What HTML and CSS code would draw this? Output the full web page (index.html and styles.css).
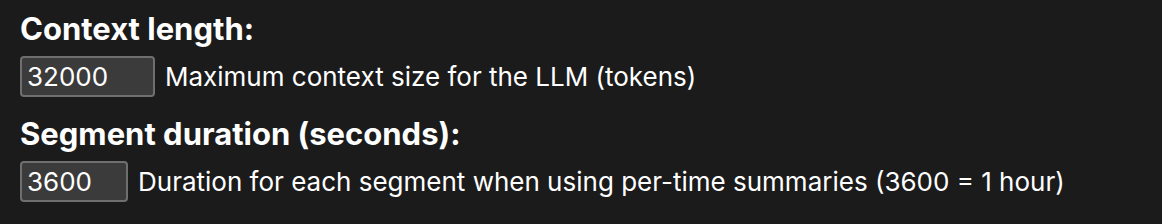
FILE: index.html
```html
<!DOCTYPE html>
<html>
<head>
<meta charset="utf-8">
<link rel="stylesheet" href="styles.css">
</head>
<body>
<div class="settings">
  <div class="field">
    <label class="label" for="ctx">Context length:</label>
    <div class="row">
      <input id="ctx" class="input input-wide" type="text" value="32000">
      <span class="desc">Maximum context size for the LLM (tokens)</span>
    </div>
  </div>
  <div class="field">
    <label class="label" for="seg">Segment duration (seconds):</label>
    <div class="row">
      <input id="seg" class="input input-narrow" type="text" value="3600">
      <span class="desc">Duration for each segment when using per-time summaries (3600 = 1 hour)</span>
    </div>
  </div>
</div>
</body>
</html>
```
FILE: styles.css
```css
html, body {
  margin: 0;
  padding: 0;
  background: #1b1b1b;
}
body {
  font-family: Inter, "Liberation Sans", sans-serif;
  color: #ffffff;
}
.settings {
  padding: 10px 20px;
  display: flex;
  flex-direction: column;
  gap: 18px;
}
.field {
  display: flex;
  flex-direction: column;
  gap: 8px;
}
.label {
  display: block;
  font-size: 31px;
  font-weight: 700;
  line-height: 38px;
}
.row {
  display: flex;
  align-items: center;
  gap: 10px;
}
.input {
  box-sizing: border-box;
  height: 41px;
  background: #3b3b3b;
  border: 2px solid #6f6f6f;
  border-radius: 4px;
  color: #ffffff;
  font-family: Inter, "Liberation Sans", sans-serif;
  font-size: 26px;
  padding: 0 5px;
  margin: 0;
  outline: none;
}
.input-wide { width: 135px; }
.input-narrow { width: 108px; }
.desc {
  font-size: 26px;
}
```
